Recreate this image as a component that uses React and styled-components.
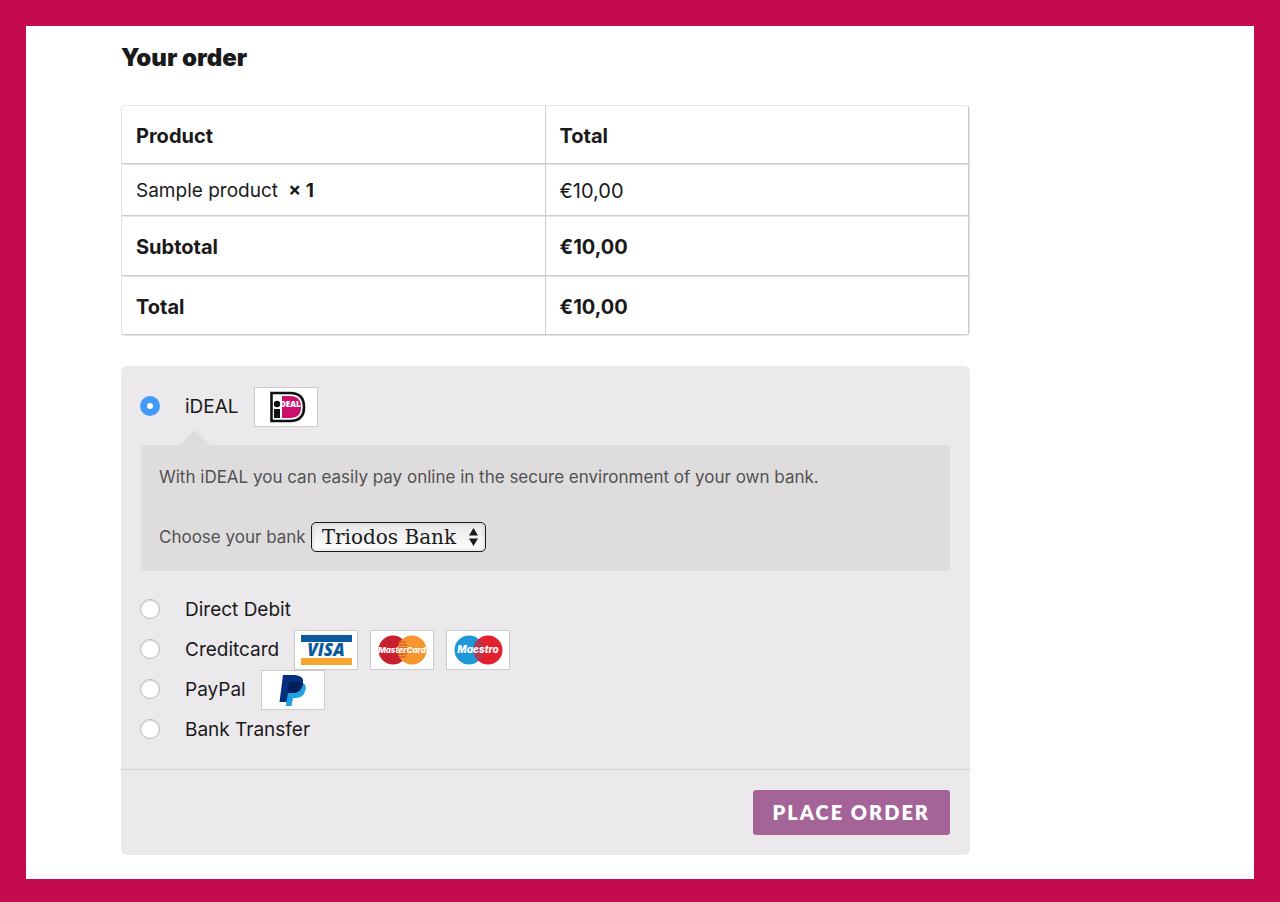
import React, { useState } from 'react';
import styled, { createGlobalStyle } from 'styled-components';

const GlobalStyle = createGlobalStyle`
  *, *::before, *::after { box-sizing: border-box; }
  body {
    margin: 0;
    background: #c40b50;
    color: #1a1a1a;
    font: 400 19px/24px Inter, "Liberation Sans", sans-serif;
  }
`;

const Frame = styled.div`
  min-height: 100vh;
  padding: 26px 26px 23px;
  display: flex;
`;

const Page = styled.main`
  flex: 1;
  background: #fff;
  padding: 16px 95px 24px;
`;

const Content = styled.div`
  max-width: 849px;
`;

const Title = styled.h1`
  margin: 0 0 31px;
  font-size: 24px;
  line-height: 32px;
  font-weight: 900;
`;

const OrderTable = styled.table`
  width: 100%;
  table-layout: fixed;
  border-collapse: separate;
  border-spacing: 0;
  border: 1px solid #e4e4e4;
  border-radius: 5px;
  margin-bottom: 30px;
`;

const Row = styled.tr`
  height: ${(p) => p.$height}px;
  & + & > *, thead + tbody & > * { border-top: 1px solid #e4e4e4; }
`;

const cell = `
  padding: 2px 14px 0;
  text-align: left;
  vertical-align: middle;
  border-right: 1px solid #ccc;
  border-bottom: 1px solid #ccc;
`;

const HeadCell = styled.th`
  ${cell}
  font-size: 20px;
  font-weight: 700;
`;

const ProductCell = styled.td`
  ${cell}
`;

const PriceCell = styled.td`
  ${cell}
  font-size: 20px;
  font-weight: ${(p) => (p.$strong ? 700 : 400)};
`;

const Quantity = styled.strong`
  margin-left: 5px;
`;

const Payment = styled.form`
  background: #ebe9eb;
  border-radius: 6px;
`;

const Methods = styled.div`
  padding: 21px 20px 19px;
`;

const Method = styled.div`
  height: 40px;
  display: flex;
  align-items: center;
`;

const Radio = styled.input`
  appearance: none;
  flex: none;
  width: 20px;
  height: 20px;
  margin: 0 25px 2px -1px;
  border-radius: 50%;
  border: 1px solid #b9b9b9;
  background: #fff;
  box-shadow: inset 0 1px 1px #ddd;
  &:checked {
    border: 7px solid #429bfb;
    box-shadow: none;
  }
`;

const Cards = styled.span`
  display: flex;
  gap: 12px;
  margin-left: 15px;
`;

const Card = styled.svg`
  display: block;
  width: 64px;
  height: 40px;
  background: #fff;
  border: 1px solid #ccc;
`;

const Details = styled.div`
  position: relative;
  margin: 18px 0 19px;
  padding: 20px 18px 19px;
  background: #dfdcde;
  border-radius: 3px;
  color: #515151;
  font-size: 17px;
  &::before {
    content: "";
    position: absolute;
    left: 39px;
    top: -15px;
    border: 15px solid transparent;
    border-top-width: 0;
    border-bottom-color: #dfdcde;
  }
`;

const Description = styled.p`
  margin: 0 0 33px;
`;

const BankField = styled.div`
  display: flex;
  align-items: center;
  gap: 5px;
`;

const SelectWrap = styled.span`
  position: relative;
  display: block;
`;

const BankSelect = styled.select`
  appearance: none;
  display: block;
  height: 30px;
  padding: 0 28px 0 10px;
  border: 1px solid #1a1a1a;
  border-radius: 5px;
  background: linear-gradient(#e6e6e6, #fff);
  box-shadow: inset 0 0 4px #ccc;
  color: #1a1a1a;
  font: 400 20px/26px "DejaVu Serif", "Liberation Serif", serif;
`;

const Arrows = styled.svg`
  position: absolute;
  right: 8px;
  top: 6px;
  width: 9px;
  height: 18px;
  pointer-events: none;
`;

const Actions = styled.div`
  display: flex;
  justify-content: flex-end;
  padding: 20px;
  border-top: 1px solid #d1cfd1;
`;

const OrderButton = styled.button`
  height: 45px;
  padding: 0 20px 2px;
  border: 0;
  border-radius: 3px;
  background: #a46497;
  color: #fff;
  font: 800 20px/24px Lato, "Liberation Sans", sans-serif;
  letter-spacing: 2px;
  text-transform: uppercase;
`;

const LogoText = styled.text`
  font-family: ${(p) => p.$family || '"Open Sans"'}, sans-serif;
  font-weight: 800;
`;

function IdealLogo() {
  return (
    <Card viewBox="0 0 62 38" role="img" aria-label="iDEAL">
      <path d="M16.500 5h18.500q14 0 14 14t-14 14h-18.500z" fill="#fff" stroke="#111" strokeWidth="2.600" />
      <path d="M27 8h8q11 0 11 11t-11 11h-8z" fill="#cc0f6b" />
      <circle cx="22" cy="16" r="3.200" fill="#111" />
      <path d="M19 21h6v9h-6z" fill="#111" />
      <LogoText x="25" y="19" fontSize="8" fill="#fff">DEAL</LogoText>
    </Card>
  );
}

function VisaLogo() {
  return (
    <Card viewBox="0 0 62 38" role="img" aria-label="Visa">
      <path d="M6 4h51v7h-51z" fill="#0b5a9d" />
      <path d="M6 27h51v7h-51z" fill="#f9a533" />
      <LogoText x="31" y="25" fontSize="17" fontStyle="italic" textAnchor="middle" fill="#0b5a9d">VISA</LogoText>
    </Card>
  );
}

function DiscsLogo({ name, left, right, dark, size }) {
  return (
    <Card viewBox="0 0 62 38" role="img" aria-label={name}>
      <circle cx="22" cy="19" r="14.500" fill={left} />
      <circle cx="41" cy="19" r="14.500" fill={right} />
      <path d="M28 11h7M27 14h9M27 17h9M27 20h9M27 23h9M28 26h7" stroke={dark} strokeWidth="1.500" />
      <LogoText $family="Inter" x="31" y="22" fontSize={size} fontStyle="italic" textAnchor="middle" fill="#fff">{name}</LogoText>
    </Card>
  );
}

function PaypalLogo() {
  return (
    <Card viewBox="0 0 62 38" role="img" aria-label="PayPal">
      <path d="M25 11h15q5 3 3.500 8q-2 8-10 8h-2.500l-1.500 8h-5.500z" fill="#1fa0e0" />
      <path d="M21 4h12q10 1 8 9q-2 9-11 9h-4l-1.500 9h-7z" fill="#053080" />
      <path d="M27 11h10l4 2q-2 9-11 9h-4.500z" fill="#041e5c" />
    </Card>
  );
}

const methods = [
  { id: 'ideal', label: 'iDEAL', logos: <IdealLogo /> },
  { id: 'debit', label: 'Direct Debit' },
  {
    id: 'creditcard',
    label: 'Creditcard',
    logos: (
      <>
        <VisaLogo />
        <DiscsLogo name="MasterCard" size={8} left="#c8202f" right="#f7962f" dark="#d9602f" />
        <DiscsLogo name="Maestro" size={10} left="#1f98d8" right="#e2202f" dark="#80507c" />
      </>
    ),
  },
  { id: 'paypal', label: 'PayPal', logos: <PaypalLogo /> },
  { id: 'transfer', label: 'Bank Transfer' },
];

export default function App() {
  const [method, setMethod] = useState('ideal');

  return (
    <Frame>
      <GlobalStyle />
      <Page>
        <Content>
          <Title>Your order</Title>
          <OrderTable>
            <thead>
              <Row $height={58}>
                <HeadCell scope="col">Product</HeadCell>
                <HeadCell scope="col">Total</HeadCell>
              </Row>
            </thead>
            <tbody>
              <Row $height={52}>
                <ProductCell>Sample product <Quantity>× 1</Quantity></ProductCell>
                <PriceCell>€10,00</PriceCell>
              </Row>
              <Row $height={60}>
                <HeadCell scope="row">Subtotal</HeadCell>
                <PriceCell $strong>€10,00</PriceCell>
              </Row>
              <Row $height={59}>
                <HeadCell scope="row">Total</HeadCell>
                <PriceCell $strong>€10,00</PriceCell>
              </Row>
            </tbody>
          </OrderTable>
          <Payment onSubmit={(e) => e.preventDefault()}>
            <Methods>
              {methods.map((m) => (
                <React.Fragment key={m.id}>
                  <Method>
                    <Radio
                      type="radio"
                      name="method"
                      id={m.id}
                      checked={method === m.id}
                      onChange={() => setMethod(m.id)}
                    />
                    <label htmlFor={m.id}>{m.label}</label>
                    {m.logos && <Cards>{m.logos}</Cards>}
                  </Method>
                  {m.id === 'ideal' && method === 'ideal' && (
                    <Details>
                      <Description>
                        With iDEAL you can easily pay online in the secure environment of your own bank.
                      </Description>
                      <BankField>
                        <label htmlFor="bank">Choose your bank</label>
                        <SelectWrap>
                          <BankSelect id="bank">
                            <option>Triodos Bank</option>
                          </BankSelect>
                          <Arrows viewBox="0 0 9 18" aria-hidden="true">
                            <path d="M4.500 0l4.500 7.500h-9zM4.500 18l-4.500-7.500h9z" fill="#1a1a1a" />
                          </Arrows>
                        </SelectWrap>
                      </BankField>
                    </Details>
                  )}
                </React.Fragment>
              ))}
            </Methods>
            <Actions>
              <OrderButton type="submit">Place order</OrderButton>
            </Actions>
          </Payment>
        </Content>
      </Page>
    </Frame>
  );
}
